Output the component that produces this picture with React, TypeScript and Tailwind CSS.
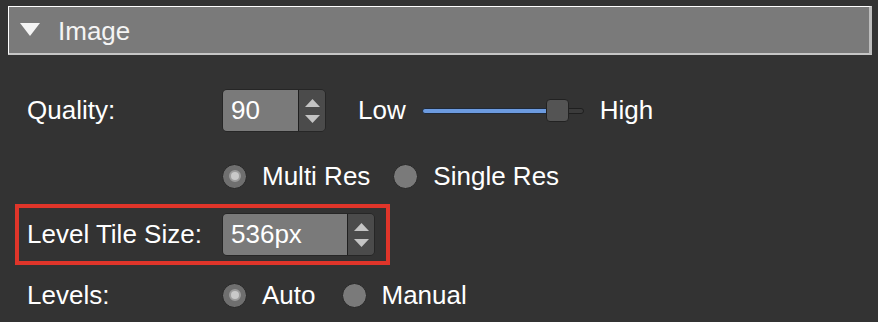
import React from "react";

const Stepper = ({ value, width }: { value: string; width: string }) => {
  return (
    <div className={`flex h-[43px] ${width} rounded-[5px] border border-[#262626] overflow-hidden`}>
      <div className="flex flex-1 items-center bg-[#7a7a7a] pl-[8px] text-[26px] text-white">{value}</div>
      <div className="flex w-[27px] flex-col items-center justify-center gap-[8px] border-l border-[#1f1f1f] bg-[#4b4b4b]">
        <svg width="15" height="8" viewBox="0 0 15 8">
          <polygon points="7.5,0 15,8 0,8" fill="#c4c4c4" />
        </svg>
        <svg width="15" height="8" viewBox="0 0 15 8">
          <polygon points="0,0 15,0 7.5,8" fill="#c4c4c4" />
        </svg>
      </div>
    </div>
  );
};

const Radio = ({ label, selected }: { label: string; selected?: boolean }) => {
  return (
    <div className="flex items-center gap-[15px]">
      <div
        className={`flex h-[25px] w-[25px] items-center justify-center rounded-full border border-[#262626] ${
          selected ? "bg-[#6f6f6f]" : "bg-[#7a7a7a]"
        }`}
      >
        {selected && <div className="h-[12px] w-[12px] rounded-full border-2 border-[#9c9c9c] bg-[#c9c9c9]" />}
      </div>
      <span className="text-[26px] text-white">{label}</span>
    </div>
  );
};

export default function App() {
  return (
    <div
      className="h-[322px] w-[878px] overflow-hidden bg-[#333333]"
      style={{ fontFamily: '"Liberation Sans", Arial, sans-serif' }}
    >
      {/* section header */}
      <div className="pt-[6px] pl-[8px] pr-[6px]">
        <div className="flex h-[49px] items-center border-t border-l border-r-[3px] border-b-2 border-t-white border-l-white border-r-[#bcbcbc] border-b-[#c6c6c6] bg-[#7a7a7a]">
          <svg className="ml-[11px]" width="20" height="14" viewBox="0 0 20 14">
            <polygon points="0,0 20,0 10,13" fill="#f4f4f4" />
          </svg>
          <span className="ml-[18px] mt-[2px] text-[26px] text-[#f4f4f4]">Image</span>
        </div>
      </div>

      <div className="flex flex-col pt-[34px]">
        {/* quality */}
        <div className="flex items-center pl-[27px]">
          <span className="w-[195px] text-[26px] text-white">Quality:</span>
          <Stepper value="90" width="w-[104px]" />
          <span className="ml-[32px] text-[26px] text-white">Low</span>
          <div className="relative ml-[16px] flex h-[23px] w-[162px] items-center">
            <div className="h-[6px] w-[126px] rounded-l-[3px] border border-[#1f2a3a] bg-[#6c9be0]" />
            <div className="h-[6px] flex-1 rounded-r-[3px] border border-[#1f1f1f] bg-[#3b3b3b]" />
            <div className="absolute left-[124px] top-0 h-[23px] w-[23px] rounded-[4px] border border-[#222] bg-[#545454]" />
          </div>
          <span className="ml-[16px] text-[26px] text-white">High</span>
        </div>

        {/* resolution */}
        <div className="mt-[29px] flex h-[30px] items-center gap-[23px] pl-[222px]">
          <Radio label="Multi Res" selected />
          <Radio label="Single Res" />
        </div>

        {/* tile size, highlighted */}
        <div className="mt-[13px] ml-[15px] flex w-[375px] items-center border-4 border-[#e0352a] py-[5px] pl-[8px]">
          <span className="w-[195px] text-[26px] text-white">Level Tile Size:</span>
          <Stepper value="536px" width="w-[153px]" />
        </div>

        {/* levels */}
        <div className="mt-[15px] flex h-[30px] items-center pl-[27px]">
          <span className="w-[195px] text-[26px] text-white">Levels:</span>
          <div className="flex items-center gap-[26px]">
            <Radio label="Auto" selected />
            <Radio label="Manual" />
          </div>
        </div>
      </div>
    </div>
  );
}
